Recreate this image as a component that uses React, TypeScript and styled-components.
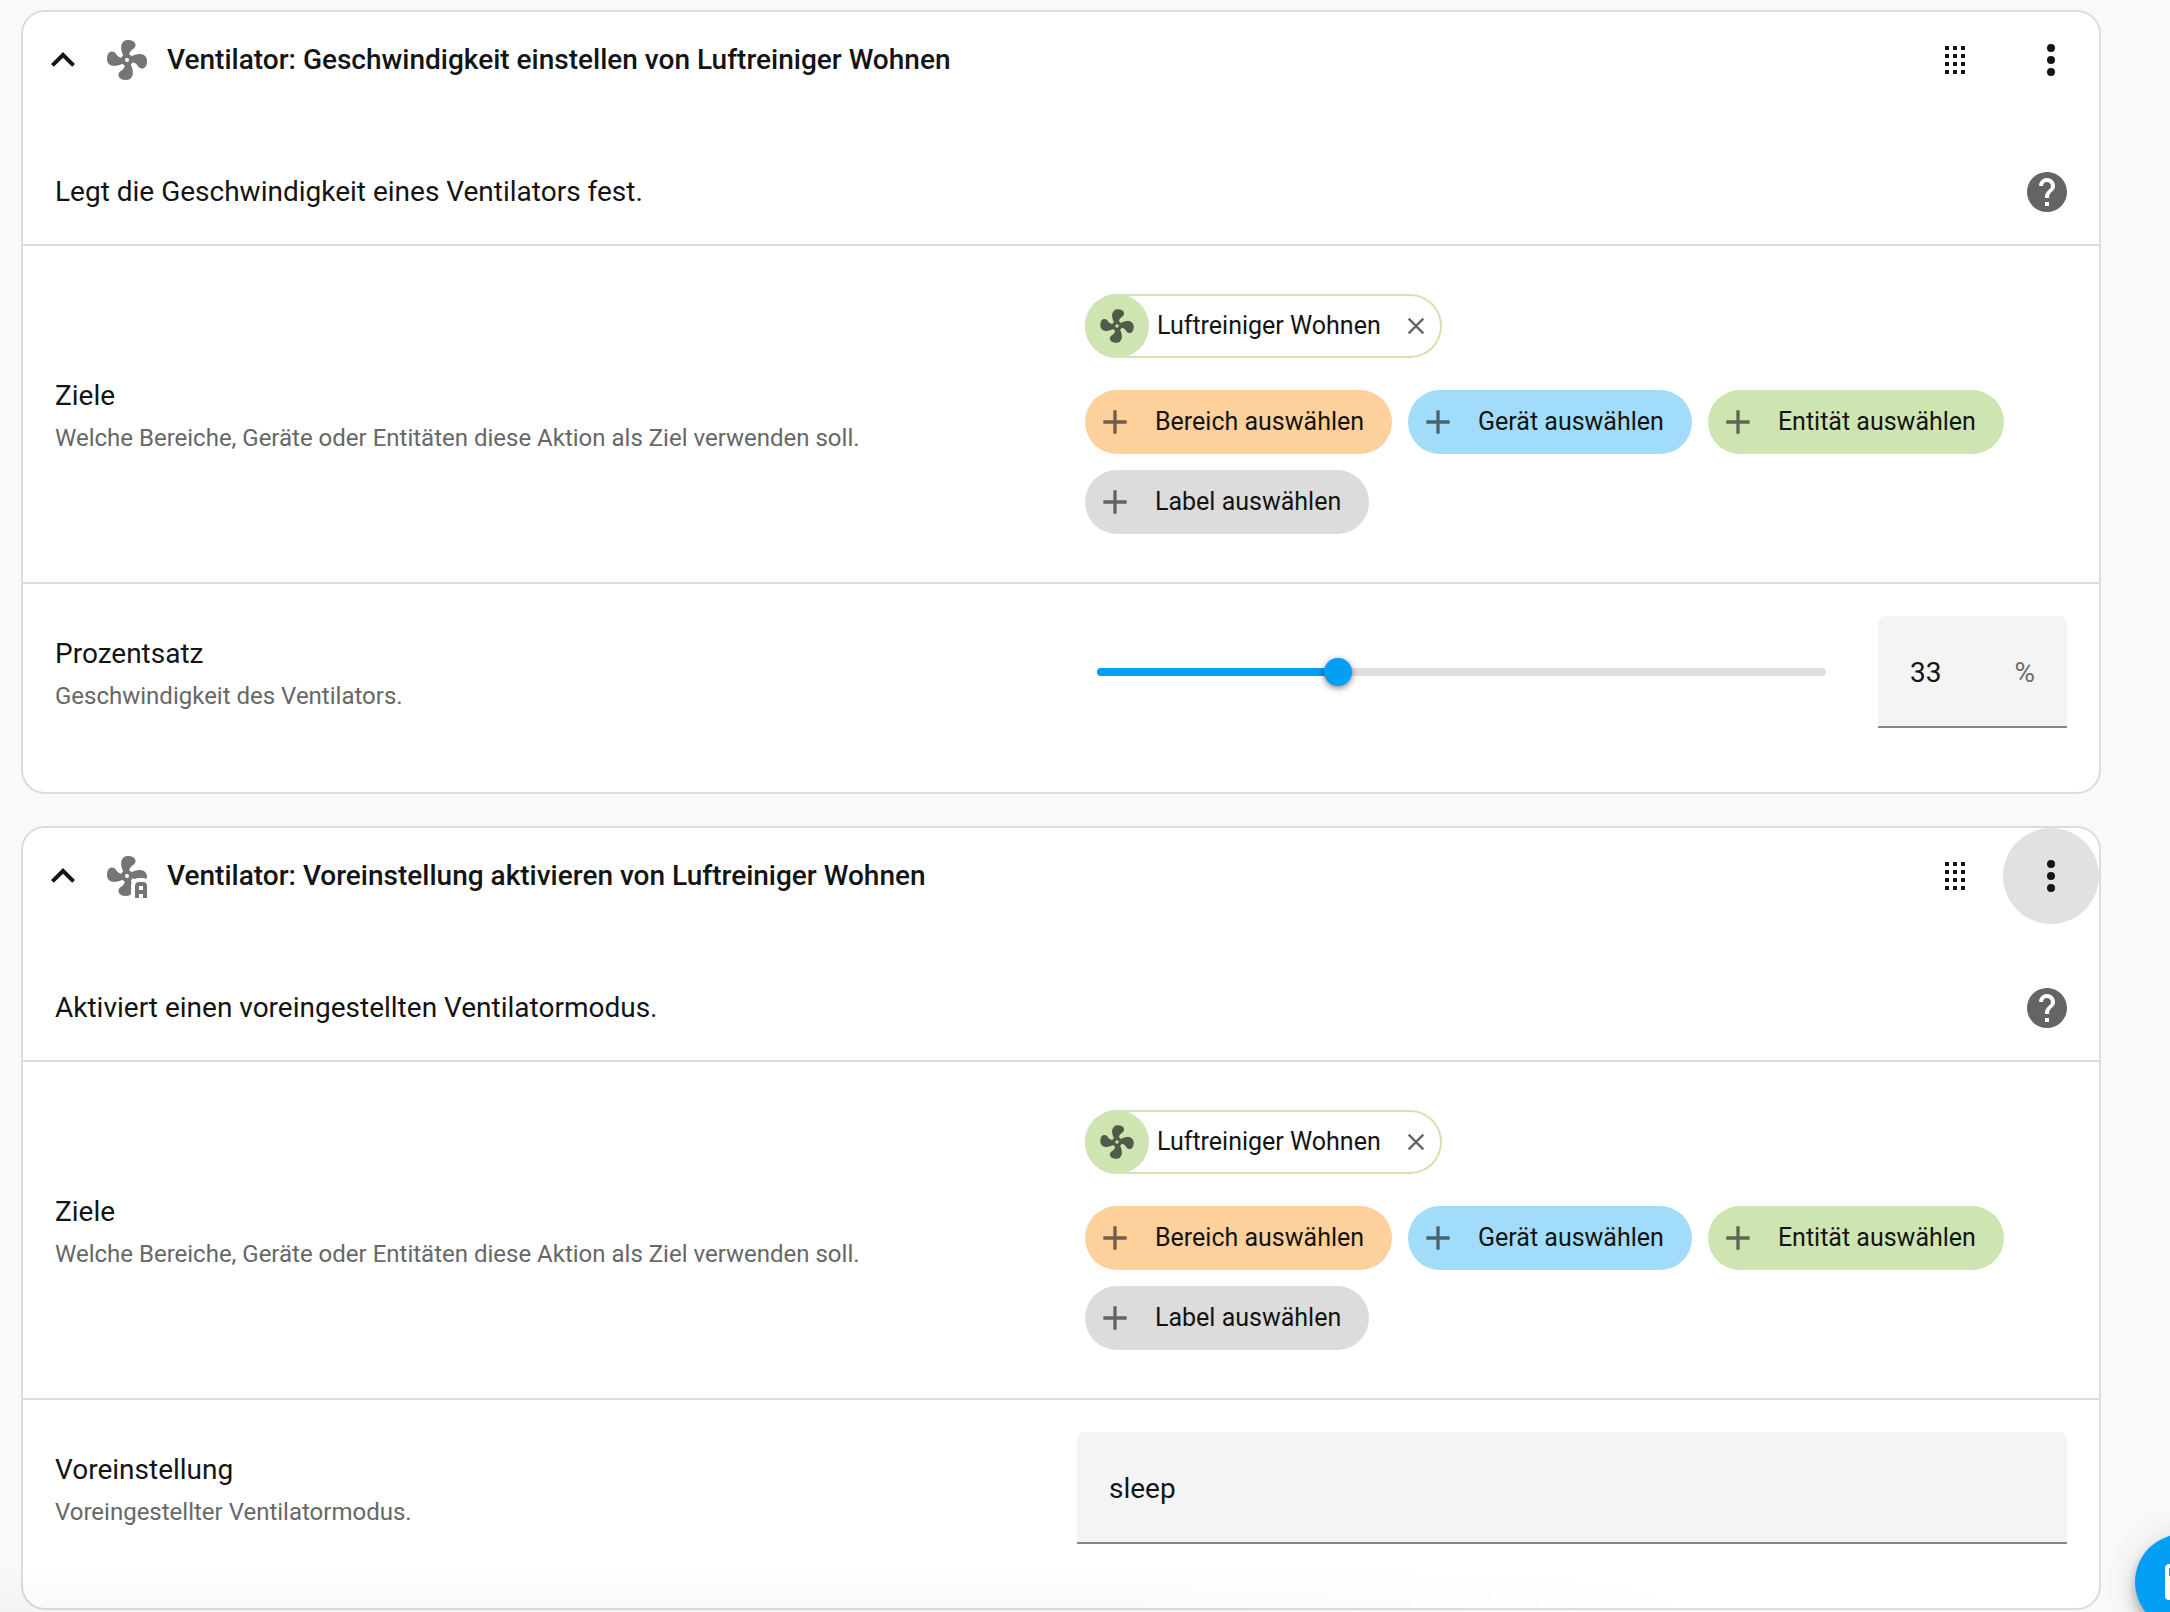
import React, { useState } from "react";
import styled, { createGlobalStyle } from "styled-components";

const GlobalStyle = createGlobalStyle`
  *, *::before, *::after { box-sizing: border-box; }
  body {
    margin: 0;
    background: #f9f9f9;
    color: #141414;
    font-family: Roboto, "Liberation Sans", sans-serif;
    font-size: 28px;
    line-height: 40px;
    -webkit-font-smoothing: antialiased;
  }
  button, input { font: inherit; color: inherit; }
  button { cursor: pointer; }
`;

const paths = {
  chevronUp: "M7.41,15.41L12,10.83L16.59,15.41L18,14L12,8L6,14L7.41,15.41Z",
  fan: "M12,11A1,1 0 0,0 11,12A1,1 0 0,0 12,13A1,1 0 0,0 13,12A1,1 0 0,0 12,11M12.5,2C17,2 17.11,5.57 14.75,6.75C13.76,7.24 13.32,8.29 13.13,9.22C13.61,9.42 14.03,9.73 14.35,10.13C18.05,8.13 22.03,8.92 22.03,12.5C22.03,17 18.46,17.1 17.28,14.73C16.78,13.74 15.72,13.3 14.79,13.11C14.59,13.59 14.28,14 13.88,14.34C15.87,18.03 15.08,22 11.5,22C7,22 6.91,18.42 9.27,17.24C10.25,16.75 10.69,15.71 10.89,14.79C10.4,14.59 9.97,14.27 9.65,13.87C5.96,15.85 2,15.07 2,11.5C2,7 5.56,6.89 6.74,9.26C7.24,10.25 8.29,10.68 9.22,10.87C9.41,10.39 9.73,9.97 10.14,9.65C8.15,5.96 8.94,2 12.5,2Z",
  autoBadge:
    "M18,15A2,2 0 0,0 16,17V23H18V21H20V23H22V17A2,2 0 0,0 20,15H18M18,17H20V19H18V17Z",
  drag: "M7,19V17H9V19H7M11,19V17H13V19H11M15,19V17H17V19H15M7,15V13H9V15H7M11,15V13H13V15H11M15,15V13H17V15H15M7,11V9H9V11H7M11,11V9H13V11H11M15,11V9H17V11H15M7,7V5H9V7H7M11,7V5H13V7H11M15,7V5H17V7H15Z",
  dots: "M12,16A2,2 0 0,1 14,18A2,2 0 0,1 12,20A2,2 0 0,1 10,18A2,2 0 0,1 12,16M12,10A2,2 0 0,1 14,12A2,2 0 0,1 12,14A2,2 0 0,1 10,12A2,2 0 0,1 12,10M12,4A2,2 0 0,1 14,6A2,2 0 0,1 12,8A2,2 0 0,1 10,6A2,2 0 0,1 12,4Z",
  help: "M15.07,11.25L14.17,12.17C13.45,12.89 13,13.5 13,15H11V14.5C11,13.39 11.45,12.39 12.17,11.67L13.41,10.41C13.78,10.05 14,9.55 14,9C14,7.89 13.1,7 12,7A2,2 0 0,0 10,9H8A4,4 0 0,1 12,5A4,4 0 0,1 16,9C16,9.88 15.64,10.67 15.07,11.25M13,19H11V17H13M12,2A10,10 0 0,0 2,12A10,10 0 0,0 12,22A10,10 0 0,0 22,12C22,6.47 17.5,2 12,2Z",
  plus: "M19,13H13V19H11V13H5V11H11V5H13V11H19V13Z",
  close:
    "M19,6.41L17.59,5L12,10.59L6.41,5L5,6.41L10.59,12L5,17.59L6.41,19L12,13.41L17.59,19L19,17.59L13.41,12L19,6.41Z",
  save: "M15,9H5V5H15M12,19A3,3 0 0,1 9,16A3,3 0 0,1 12,13A3,3 0 0,1 15,16A3,3 0 0,1 12,19M17,3H5C3.89,3 3,3.9 3,5V19A2,2 0 0,0 5,21H19A2,2 0 0,0 21,19V7L17,3Z",
};

const Svg = styled.svg<{ $size: number }>`
  display: block;
  flex: none;
  width: ${(p) => p.$size}px;
  height: ${(p) => p.$size}px;
  fill: currentColor;
`;

function Icon({
  name,
  size = 48,
  viewBox = "0 0 24 24",
}: {
  name: keyof typeof paths;
  size?: number;
  viewBox?: string;
}) {
  return (
    <Svg $size={size} viewBox={viewBox} aria-hidden="true">
      <path d={paths[name]} />
    </Svg>
  );
}

function FanAutoIcon() {
  return (
    <Svg $size={48} viewBox="0 0 24 24" aria-hidden="true">
      <mask id="fan-auto-cut">
        <rect width="24" height="24" fill="#fff" />
        <rect x="14" y="13" width="10" height="14" rx="4" fill="#000" />
      </mask>
      <path d={paths.fan} mask="url(#fan-auto-cut)" />
      <path d={paths.autoBadge} />
    </Svg>
  );
}

const Page = styled.main`
  display: flex;
  flex-direction: column;
  gap: 32px;
  padding: 10px 69px 2px 21px;
`;

const Card = styled.section`
  background: #fff;
  border: 2px solid #dcdcdc;
  border-radius: 24px;
  padding-bottom: 32px;
`;

const CardHeader = styled.header`
  display: flex;
  align-items: center;
  padding-left: 16px;
`;

const PlainButton = styled.button`
  display: grid;
  place-items: center;
  flex: none;
  padding: 0;
  border: 0;
  background: none;
`;

const IconButton = styled(PlainButton)<{ $active?: boolean }>`
  width: 96px;
  height: 96px;
  border-radius: 50%;
  background: ${(p) => (p.$active ? "#e1e1e1" : "none")};
`;

const HelpLink = styled.a`
  flex: none;
  color: #646464;
`;

const HeaderIcon = styled.span`
  margin: 0 16px;
  color: #757575;
`;

const Title = styled.h3`
  flex: 1;
  margin: 0;
  font-size: 28px;
  font-weight: 500;
`;

const Description = styled.div`
  display: flex;
  align-items: center;
  justify-content: space-between;
  padding: 64px 32px 32px;

  p { margin: 0; }
`;

const Row = styled.div`
  display: grid;
  grid-template-columns: 1fr 1fr;
  gap: 32px;
  align-items: center;
  padding: 32px;
  border-top: 2px solid #dcdcdc;
`;

const RowText = styled.div`
  display: flex;
  flex-direction: column;
  gap: 2px;
  padding-top: 2px;
`;

const RowLabel = styled.label`
  line-height: 44px;
`;

const RowHint = styled.span`
  font-size: 24px;
  line-height: 36px;
  color: #676767;
`;

const Targets = styled.div`
  display: flex;
  flex-direction: column;
  gap: 32px;
  padding: 16px 8px;
`;

const ChipRow = styled.div`
  display: flex;
  flex-wrap: wrap;
  gap: 16px;
`;

const EntityChip = styled.div`
  display: flex;
  align-items: center;
  gap: 8px;
  height: 64px;
  padding-right: 12px;
  border-radius: 32px;
  box-shadow: inset 0 0 0 2px #cee4b1;
  font-size: 25px;
`;

const EntityBadge = styled.span`
  display: grid;
  place-items: center;
  width: 64px;
  height: 64px;
  border-radius: 50%;
  background: #cee4b1;
  color: #525b47;
`;

const RemoveButton = styled(PlainButton)`
  margin-left: 13px;
  color: #666;
`;

const AddButton = styled.button<{ $color: string }>`
  display: flex;
  align-items: center;
  gap: 20px;
  height: 64px;
  padding: 0 28px 0 10px;
  border: 0;
  border-radius: 32px;
  background: ${(p) => p.$color};
  font-size: 25px;

  svg { opacity: 0.6; }
`;

const SliderGroup = styled.div`
  display: flex;
  align-items: center;
  gap: 32px;
`;

const SliderBox = styled.div`
  display: grid;
  flex: 1;
  align-items: center;

  > * { grid-area: 1 / 1; }
`;

const SliderTrack = styled.div`
  height: 8px;
  margin: 0 20px;
  border-radius: 4px;
  overflow: hidden;
  background: #e2dce4;
`;

const SliderFill = styled.div`
  height: 100%;
  background: #039ff4;
`;

const Slider = styled.input`
  appearance: none;
  height: 28px;
  margin: 0 6px;
  background: none;

  &::-webkit-slider-thumb {
    appearance: none;
    width: 28px;
    height: 28px;
    border-radius: 50%;
    background: #039ff4;
    box-shadow: 0 2px 6px rgba(0, 0, 0, 0.5);
  }
`;

const Field = styled.div<{ $width?: string }>`
  display: flex;
  align-items: center;
  width: ${(p) => p.$width ?? "100%"};
  height: 112px;
  padding: 4px 32px 0;
  border-bottom: 2px solid #858585;
  border-radius: 8px 8px 0 0;
  background: #f4f4f4;
`;

const FieldInput = styled.input`
  flex: 1;
  min-width: 0;
  height: 40px;
  padding: 0;
  border: 0;
  outline: 0;
  background: none;
`;

const Unit = styled.span`
  color: #6b6b6b;
`;

const BottomShade = styled.div`
  position: fixed;
  inset: auto 0 0 0;
  height: 48px;
  pointer-events: none;
  background: linear-gradient(to top, rgba(0, 0, 0, 0.024), transparent);
  mask-image: linear-gradient(to right, #000 50%, transparent 80%);
`;

const SaveButton = styled(PlainButton)`
  position: fixed;
  right: -61px;
  bottom: -18px;
  width: 96px;
  height: 96px;
  border-radius: 50%;
  background: #039ff4;
  color: #fff;
  box-shadow: 0 6px 10px rgba(0, 0, 0, 0.2), 0 12px 20px rgba(0, 0, 0, 0.14),
    0 2px 36px rgba(0, 0, 0, 0.12);
`;

const targetKinds = [
  { label: "Bereich auswählen", color: "#fed09b" },
  { label: "Gerät auswählen", color: "#a1dcfa" },
  { label: "Entität auswählen", color: "#cee4b1" },
  { label: "Label auswählen", color: "#dcdcdc" },
];

function TargetRow() {
  return (
    <Row>
      <RowText>
        <RowLabel as="span">Ziele</RowLabel>
        <RowHint>Welche Bereiche, Geräte oder Entitäten diese Aktion als Ziel verwenden soll.</RowHint>
      </RowText>
      <Targets>
        <ChipRow>
          <EntityChip>
            <EntityBadge>
              <Icon name="fan" size={40} />
            </EntityBadge>
            Luftreiniger Wohnen
            <RemoveButton type="button" aria-label="Entfernen">
              <Icon name="close" size={28} />
            </RemoveButton>
          </EntityChip>
        </ChipRow>
        <ChipRow>
          {targetKinds.map((kind) => (
            <AddButton key={kind.label} type="button" $color={kind.color}>
              <Icon name="plus" size={40} />
              {kind.label}
            </AddButton>
          ))}
        </ChipRow>
      </Targets>
    </Row>
  );
}

function ActionCard({
  title,
  icon,
  description,
  menuActive,
  children,
}: {
  title: string;
  icon: React.ReactNode;
  description: string;
  menuActive?: boolean;
  children: React.ReactNode;
}) {
  return (
    <Card>
      <CardHeader>
        <PlainButton type="button" aria-label="Einklappen" aria-expanded="true">
          <Icon name="chevronUp" />
        </PlainButton>
        <HeaderIcon>{icon}</HeaderIcon>
        <Title>{title}</Title>
        <IconButton type="button" aria-label="Verschieben">
          <Icon name="drag" />
        </IconButton>
        <IconButton type="button" aria-label="Menü" $active={menuActive}>
          <Icon name="dots" />
        </IconButton>
      </CardHeader>
      <Description>
        <p>{description}</p>
        <HelpLink href="#hilfe" aria-label="Hilfe">
          <Icon name="help" size={40} viewBox="2 2 20 20" />
        </HelpLink>
      </Description>
      <TargetRow />
      {children}
    </Card>
  );
}

export default function App() {
  const [percent, setPercent] = useState(33);
  const [preset, setPreset] = useState("sleep");

  return (
    <>
      <GlobalStyle />
      <Page>
        <ActionCard
          title="Ventilator: Geschwindigkeit einstellen von Luftreiniger Wohnen"
          icon={<Icon name="fan" />}
          description="Legt die Geschwindigkeit eines Ventilators fest."
        >
          <Row>
            <RowText>
              <RowLabel htmlFor="percent">Prozentsatz</RowLabel>
              <RowHint>Geschwindigkeit des Ventilators.</RowHint>
            </RowText>
            <SliderGroup>
              <SliderBox>
                <SliderTrack>
                  <SliderFill style={{ width: `${percent}%` }} />
                </SliderTrack>
                <Slider
                  type="range"
                  min={0}
                  max={100}
                  aria-label="Prozentsatz"
                  value={percent}
                  onChange={(e) => setPercent(Number(e.target.value))}
                />
              </SliderBox>
              <Field $width="189px">
                <FieldInput
                  id="percent"
                  inputMode="numeric"
                  value={percent}
                  onChange={(e) => setPercent(Number(e.target.value) || 0)}
                />
                <Unit>%</Unit>
              </Field>
            </SliderGroup>
          </Row>
        </ActionCard>
        <ActionCard
          title="Ventilator: Voreinstellung aktivieren von Luftreiniger Wohnen"
          icon={<FanAutoIcon />}
          description="Aktiviert einen voreingestellten Ventilatormodus."
          menuActive
        >
          <Row>
            <RowText>
              <RowLabel htmlFor="preset">Voreinstellung</RowLabel>
              <RowHint>Voreingestellter Ventilatormodus.</RowHint>
            </RowText>
            <Field>
              <FieldInput
                id="preset"
                value={preset}
                onChange={(e) => setPreset(e.target.value)}
              />
            </Field>
          </Row>
        </ActionCard>
      </Page>
      <BottomShade />
      <SaveButton type="button" aria-label="Speichern">
        <Icon name="save" />
      </SaveButton>
    </>
  );
}
